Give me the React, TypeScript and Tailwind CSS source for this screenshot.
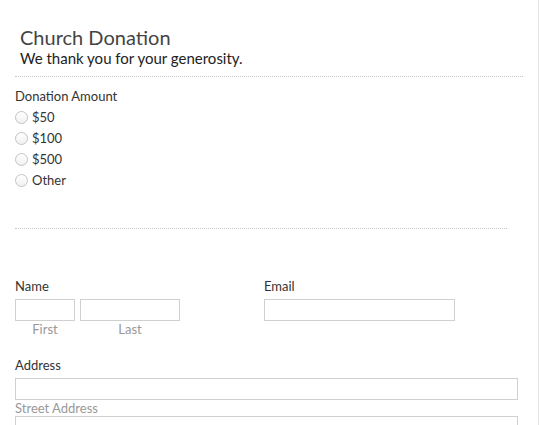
export default function App() {
  const amounts = ["$50", "$100", "$500", "Other"];

  return (
    <div className="min-h-screen w-[539px] overflow-hidden border-r border-[#e4e4e4] bg-white pl-[15px] font-['Lato','Open_Sans',sans-serif] text-[#333]">
      {/* header */}
      <div className="pl-[5px] pt-[25px]">
        <h1 className="text-[20px] leading-[24px] text-[#444]">Church Donation</h1>
        <p className="text-[15px] leading-[18px] text-[#222]">We thank you for your generosity.</p>
      </div>
      <div className="mt-[9px] w-[508px] border-t border-dotted border-[#c8c8c8]" />

      {/* donation amount */}
      <div className="pt-[11px]">
        <div className="text-[13px] leading-[16px] text-[#333]">Donation Amount</div>
        <div className="mt-[3px] flex flex-col">
          {amounts.map((a) => (
            <label key={a} className="flex h-[21px] items-center gap-[4px] text-[13px] text-[#333]">
              <span className="h-[13px] w-[13px] rounded-full border border-[#c4c4c4] bg-gradient-to-b from-white to-[#f1f1f1]" />
              {a}
            </label>
          ))}
        </div>
      </div>
      <div className="mt-[37px] w-[492px] border-t border-dotted border-[#c8c8c8]" />

      {/* name / email */}
      <div className="mt-[49px] flex">
        <div className="w-[249px]">
          <div className="text-[13px] leading-[16px]">Name</div>
          <div className="mt-[5px] flex gap-[5px]">
            <div className="flex w-[60px] flex-col items-center">
              <div className="h-[22px] w-full border border-[#d0d0d0]" />
              <span className="text-[13px] leading-[16px] text-[#999]">First</span>
            </div>
            <div className="flex w-[100px] flex-col items-center">
              <div className="h-[22px] w-full border border-[#d0d0d0]" />
              <span className="text-[13px] leading-[16px] text-[#999]">Last</span>
            </div>
          </div>
        </div>
        <div>
          <div className="text-[13px] leading-[16px]">Email</div>
          <div className="mt-[5px] h-[22px] w-[191px] border border-[#d0d0d0]" />
        </div>
      </div>

      {/* address */}
      <div className="mt-[20px]">
        <div className="text-[13px] leading-[16px]">Address</div>
        <div className="mt-[5px] h-[22px] w-[503px] border border-[#d0d0d0]" />
        <div className="text-[13px] leading-[16px] text-[#999]">Street Address</div>
        <div className="h-[22px] w-[503px] border border-[#d0d0d0]" />
      </div>
    </div>
  );
}
